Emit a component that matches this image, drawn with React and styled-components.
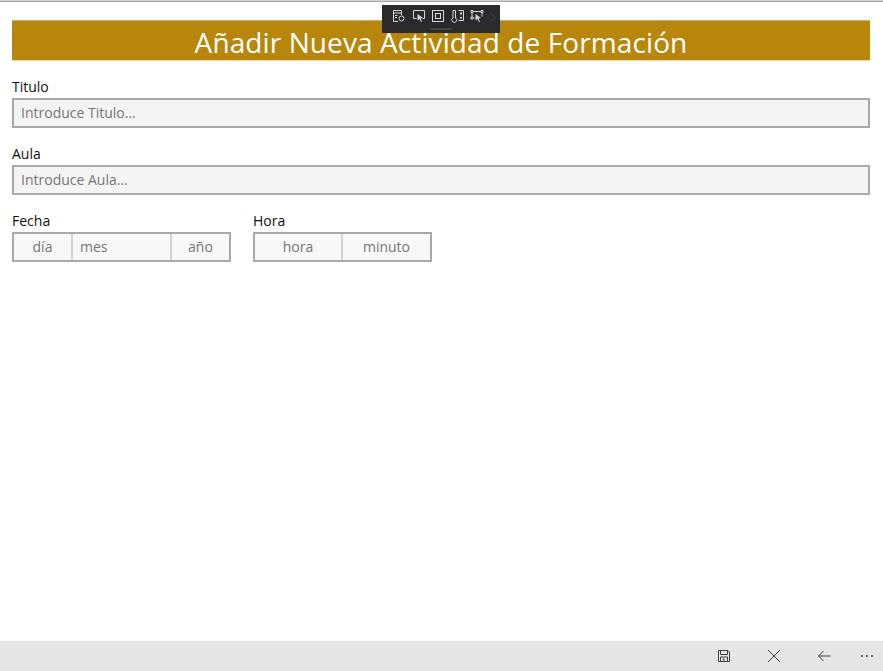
import React from 'react';
import styled, { createGlobalStyle } from 'styled-components';

const GlobalStyle = createGlobalStyle`
  html, body {
    margin: 0;
    padding: 0;
    background: #fff;
    overflow: hidden;
  }
  body {
    font-family: "Open Sans", "Noto Sans", "Liberation Sans", sans-serif;
  }
`;

const Page = styled.div`
  position: relative;
  width: 883px;
  height: 671px;
  display: flex;
  flex-direction: column;
`;

const TopEdge = styled.div`
  height: 2px;
  flex: none;
  background: linear-gradient(#d4d4d4 50%, #a4a4a4 50%);
`;

const Content = styled.main`
  flex: 1;
  padding: 18px 13px 0 12px;
`;

const Banner = styled.h1`
  box-sizing: border-box;
  margin: 0 0 14px;
  height: 41px;
  background: #b8860b;
  border-top: 1px solid #d0b063;
  border-bottom: 1px solid #ead9ad;
  color: #fff;
  font-size: 28px;
  font-weight: 400;
  line-height: 42px;
  letter-spacing: 0.1px;
  text-align: center;
  white-space: nowrap;
  overflow: hidden;
`;

const Field = styled.div`
  margin-bottom: 14px;
`;

const Label = styled.label`
  display: block;
  height: 23px;
  color: #111;
  font-size: 14px;
  line-height: 24px;
`;

const TextInput = styled.input`
  display: block;
  box-sizing: border-box;
  width: 100%;
  height: 30px;
  margin: 0;
  padding: 0 7px 2px;
  background: #f4f4f4;
  border: 2px solid #a9a9a9;
  border-radius: 0;
  color: #111;
  font-family: inherit;
  font-size: 14px;
  outline: none;

  &::placeholder {
    color: #767676;
    opacity: 1;
  }
`;

const PickerRow = styled.div`
  display: flex;
  gap: 22px;
`;

const Picker = styled.div`
  display: flex;
  box-sizing: border-box;
  width: ${(p) => p.$width}px;
  height: 30px;
  background: #f8f8f8;
  border: 2px solid #a9a9a9;
`;

const Segment = styled.div`
  box-sizing: border-box;
  width: ${(p) => p.$width}px;
  flex: ${(p) => (p.$width ? 'none' : 1)};
  padding-left: ${(p) => (p.$left ? '7px' : 0)};
  border-left: ${(p) => (p.$first ? 'none' : '2px solid #d2d2d2')};
  color: #767676;
  font-size: 14px;
  line-height: 26px;
  text-align: ${(p) => (p.$left ? 'left' : 'center')};
`;

const DebugToolbar = styled.div`
  position: absolute;
  top: 5px;
  left: 382px;
  width: 118px;
  height: 28px;
  box-sizing: border-box;
  padding: 4px 0 0 10px;
  display: flex;
  gap: 5.5px;
  background: #2a2a2c;
  color: #d6d6d6;
`;

const ToolIcon = styled.svg`
  width: 14px;
  height: 14px;
  fill: none;
  stroke: currentColor;
  stroke-width: 1;
`;

const ToolChevron = styled.svg`
  position: absolute;
  top: 8px;
  left: 108px;
  width: 6px;
  height: 9px;
  fill: none;
  stroke: #4c4c4e;
  stroke-width: 1;
`;

const ToolGrip = styled.span`
  position: absolute;
  left: 48px;
  bottom: 3px;
  width: 22px;
  height: 2px;
  border-radius: 1px;
  background: #444446;
`;

const CommandBar = styled.footer`
  height: 30px;
  flex: none;
  display: flex;
  justify-content: flex-end;
  align-items: center;
  background: #e6e6e6;
`;

const CommandButton = styled.button`
  width: 50px;
  height: 30px;
  padding: 0;
  border: none;
  background: none;
  display: flex;
  align-items: center;
  justify-content: center;
  color: #404040;
`;

const CommandIcon = styled.svg`
  width: 14px;
  height: 14px;
  fill: none;
  stroke: currentColor;
  stroke-width: 1;
`;

const MoreButton = styled(CommandButton)`
  width: 34px;
  padding-left: 2px;
  box-sizing: border-box;
`;

const App = () => (
  <Page>
    <GlobalStyle />
    <TopEdge />
    <Content>
      <Banner>Añadir Nueva Actividad de Formación</Banner>
      <Field>
        <Label>Titulo</Label>
        <TextInput placeholder="Introduce Titulo..." />
      </Field>
      <Field>
        <Label>Aula</Label>
        <TextInput placeholder="Introduce Aula..." />
      </Field>
      <PickerRow>
        <div>
          <Label>Fecha</Label>
          <Picker $width={219}>
            <Segment $first $width={57}>día</Segment>
            <Segment $left $width={99}>mes</Segment>
            <Segment>año</Segment>
          </Picker>
        </div>
        <div>
          <Label>Hora</Label>
          <Picker $width={179}>
            <Segment $first $width={86}>hora</Segment>
            <Segment>minuto</Segment>
          </Picker>
        </div>
      </PickerRow>
    </Content>

    <CommandBar>
      <CommandButton aria-label="Guardar">
        <CommandIcon viewBox="0 0 14 14">
          <path d="M1.500 1.500h9.500l1.500 1.500v9.500h-11z" />
          <path d="M3.500 1.500v4h7v-4" />
          <path d="M3.500 12.500v-4.500h7v4.500" />
          <path d="M5.500 10h1.500v2.500" />
        </CommandIcon>
      </CommandButton>
      <CommandButton aria-label="Cancelar">
        <CommandIcon viewBox="0 0 14 14">
          <path d="M1 1l12 12M13 1L1 13" />
        </CommandIcon>
      </CommandButton>
      <CommandButton aria-label="Volver">
        <CommandIcon viewBox="0 0 14 14">
          <path d="M1.500 7h12M6.500 2l-5 5 5 5" />
        </CommandIcon>
      </CommandButton>
      <MoreButton aria-label="Más">
        <CommandIcon viewBox="0 0 14 14">
          <path d="M1 7h2M6 7h2M11 7h2" strokeWidth="1.500" />
        </CommandIcon>
      </MoreButton>
    </CommandBar>

    <DebugToolbar>
      <ToolIcon viewBox="0 0 14 14">
        <path d="M6 12.500H1.500v-11h8V6" />
        <path d="M1.500 4h8M3 6.500h2.500M3 8.500h2" />
        <circle cx="9.500" cy="9.500" r="2.500" />
      </ToolIcon>
      <ToolIcon viewBox="0 0 14 14">
        <path d="M4.500 9.500h-3v-8h11v8h-2" />
        <path d="M5.500 5l5.500 4-2.500.5 1.500 3-1 .5-1.500-3-2 1.500z" fill="currentColor" stroke="none" />
      </ToolIcon>
      <ToolIcon viewBox="0 0 14 14">
        <rect x="1.500" y="1.500" width="11" height="11" />
        <rect x="4.500" y="4.500" width="5" height="5" />
      </ToolIcon>
      <ToolIcon viewBox="0 0 14 14">
        <path d="M2 1.500h2.500v7.500a2.400 2.400 0 1 1-2.500 0z" />
        <path d="M7.500 1.500h5v10h-5" />
        <path d="M9 3.500h2v2H9zM9 8h2v1.500H9z" fill="currentColor" stroke="none" />
      </ToolIcon>
      <ToolIcon viewBox="0 0 14 14">
        <path d="M1 1.500h2v2H1zM11 1.500h2v2h-2zM1 8h2v2H1z" />
        <path d="M3 2.500h8M2 3.500V8M12 3.500v4M3 9h1.500" />
        <path d="M5.500 5l5.500 4-2.500.5 1.500 3-1 .5-1.500-3-2 1.500z" fill="currentColor" stroke="none" />
      </ToolIcon>
      <ToolChevron viewBox="0 0 6 9">
        <path d="M1 .5l4 4-4 4" />
      </ToolChevron>
      <ToolGrip />
    </DebugToolbar>
  </Page>
);

export default App;
